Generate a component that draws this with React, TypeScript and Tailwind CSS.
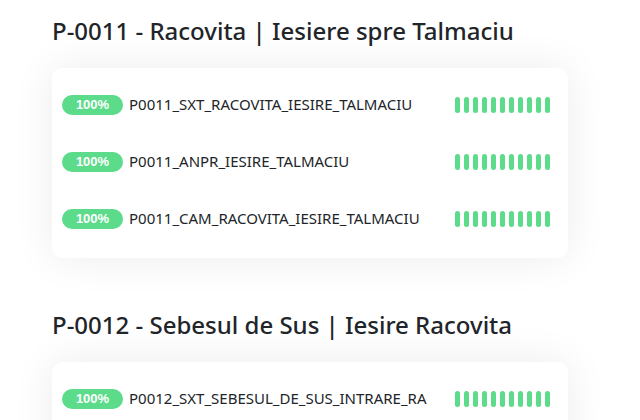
import React from 'react';

interface Point {
    name: string;
}

interface Section {
    title: string;
    points: Point[];
}

const sections: Section[] = [
    {
        title: 'P-0011 - Racovita | Iesiere spre Talmaciu',
        points: [
            { name: 'P0011_SXT_RACOVITA_IESIRE_TALMACIU' },
            { name: 'P0011_ANPR_IESIRE_TALMACIU' },
            { name: 'P0011_CAM_RACOVITA_IESIRE_TALMACIU' },
        ],
    },
    {
        title: 'P-0012 - Sebesul de Sus | Iesire Racovita',
        points: [
            { name: 'P0012_SXT_SEBESUL_DE_SUS_INTRARE_RACOVITA' },
            { name: 'P0012_ANPR_SEBESUL_DE_SUS' },
        ],
    },
];

const UptimeBars: React.FC = () => (
    <div className="flex gap-[4px]">
        {Array.from({ length: 11 }).map((_, i) => (
            <div key={i} className="w-[5px] h-[16px] rounded-full bg-[#5cdb8b]" />
        ))}
    </div>
);

const App: React.FC = () => {
    return (
        <div className="min-h-screen bg-white px-[52px] pt-[15px]" style={{ fontFamily: '"Noto Sans", "Open Sans", sans-serif' }}>
            {sections.map((section, idx) => (
                <div key={idx} className={idx > 0 ? 'mt-[51px]' : ''}>
                    <h2 className="text-[24px] leading-[32px] font-medium text-[#212529]">{section.title}</h2>
                    <div className="mt-[21px] w-[516px] bg-white rounded-[10px] shadow-[0_0_40px_rgba(0,0,0,0.08)] pt-2 pb-[11px]">
                        {section.points.map(point => (
                            <div key={point.name} className="h-[57px] flex items-center pl-[10px] pr-[18px]">
                                <span
                                    className="w-[61px] h-[20px] rounded-full bg-[#5cdb8b] text-white text-[13px] font-bold flex items-center justify-center shrink-0"
                                    style={{ fontFamily: '"Liberation Sans", Arial, sans-serif' }}
                                >
                                    100%
                                </span>
                                <span className="ml-[6px] w-[298px] overflow-hidden whitespace-nowrap text-[15px] text-[#212529]">
                                    {point.name}
                                </span>
                                <div className="ml-auto">
                                    <UptimeBars />
                                </div>
                            </div>
                        ))}
                    </div>
                </div>
            ))}
        </div>
    );
};

export default App;
